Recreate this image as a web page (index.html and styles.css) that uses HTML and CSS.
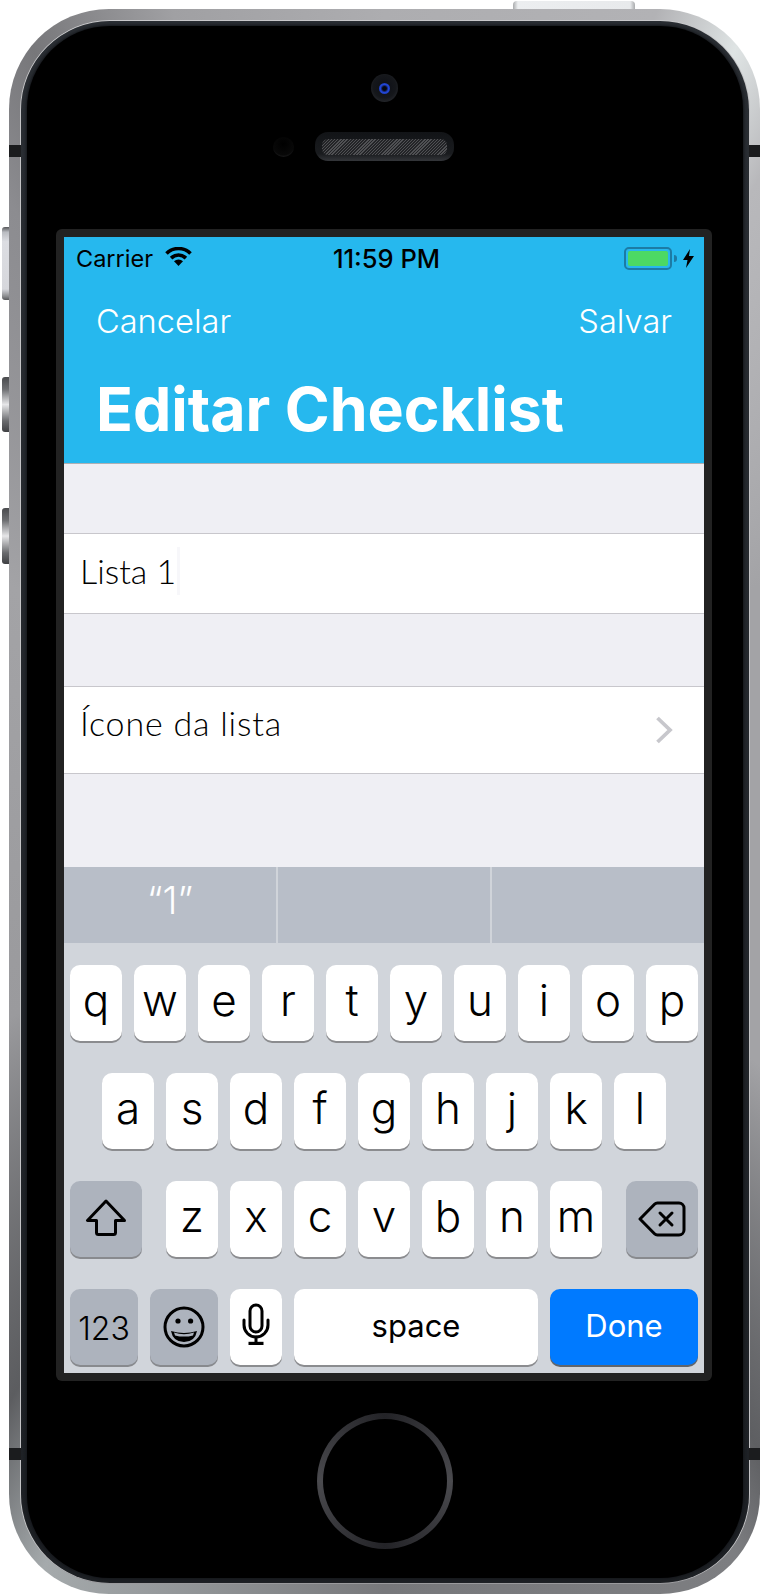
FILE: index.html
```html
<!DOCTYPE html>
<html lang="pt">
<head>
<meta charset="utf-8">
<title>Editar Checklist</title>
<link rel="stylesheet" href="styles.css">
</head>
<body>
<div class="device">
  <span class="btn-top"></span>
  <span class="btn-side btn-silent"></span>
  <span class="btn-side btn-vol btn-vol-up"></span>
  <span class="btn-side btn-vol btn-vol-down"></span>
  <div class="metal">
    <span class="band band-l band-upper"></span>
    <span class="band band-r band-upper"></span>
    <span class="band band-l band-lower"></span>
    <span class="band band-r band-lower"></span>
    <div class="rim">
      <div class="face">
        <div class="camera"><span class="lens"></span></div>
        <div class="earpiece">
          <span class="sensor"></span>
          <div class="speaker"><span class="grille"></span></div>
        </div>
        <div class="bezel">
          <div class="screen">
            <header class="nav">
              <div class="status">
                <div class="status-left">
                  <span>Carrier</span>
                  <svg class="wifi" width="27" height="19" viewBox="0 0 27 19"><path class="wifi-arc" d="M1.5 6.5A17 17 0 0 1 25.5 6.5"/><path class="wifi-arc" d="M6.1 11.1A10.5 10.5 0 0 1 20.9 11.1"/><path d="M13.5 19L9 14.2A6.5 6.5 0 0 1 18 14.2Z"/></svg>
                </div>
                <div class="status-time">11:59 PM</div>
                <div class="status-right">
                  <span class="battery"><span class="battery-fill"></span></span>
                  <span class="battery-nub"></span>
                  <svg class="bolt" width="11" height="19" viewBox="0 0 11 19"><path d="M7 0L0 11H4.5L3 19L11 7H6Z"/></svg>
                </div>
              </div>
              <div class="nav-actions">
                <span>Cancelar</span>
                <span>Salvar</span>
              </div>
              <h1 class="nav-title">Editar Checklist</h1>
            </header>
            <main class="content">
              <div class="cell cell-name">
                <span class="cell-text">Lista 1</span>
                <span class="caret"></span>
              </div>
              <div class="cell cell-icon">
                <span class="cell-text cell-text-wide">Ícone da lista</span>
                <svg class="chevron" width="18" height="28" viewBox="0 0 18 28"><path d="M2.5 2L15 14L2.5 26"/></svg>
              </div>
            </main>
            <section class="keyboard">
              <div class="suggestions">
                <div class="suggestion">“1”</div>
                <div class="suggestion"></div>
                <div class="suggestion"></div>
              </div>
              <div class="keys">
                <div class="row">
                  <span class="key">q</span><span class="key">w</span><span class="key">e</span><span class="key">r</span><span class="key">t</span><span class="key">y</span><span class="key">u</span><span class="key">i</span><span class="key">o</span><span class="key">p</span>
                </div>
                <div class="row row-home">
                  <span class="key">a</span><span class="key">s</span><span class="key">d</span><span class="key">f</span><span class="key">g</span><span class="key">h</span><span class="key">j</span><span class="key">k</span><span class="key">l</span>
                </div>
                <div class="row row-shift">
                  <span class="key key-dark key-wide">
                    <svg class="key-icon" width="44" height="40" viewBox="0 0 44 40"><path d="M22 2L3.5 21.5H12.5V33.5A2 2 0 0 0 14.5 35.5H29.5A2 2 0 0 0 31.5 33.5V21.5H40.5Z"/></svg>
                  </span>
                  <div class="row-letters">
                    <span class="key">z</span><span class="key">x</span><span class="key">c</span><span class="key">v</span><span class="key">b</span><span class="key">n</span><span class="key">m</span>
                  </div>
                  <span class="key key-dark key-wide">
                    <svg class="key-icon" width="48" height="36" viewBox="0 0 48 36"><path d="M2 18L16.5 3.2Q17.7 2 19.4 2H41A5 5 0 0 1 46 7V29A5 5 0 0 1 41 34H19.4Q17.7 34 16.5 32.8Z"/><path d="M22 12L34 24M34 12L22 24"/></svg>
                  </span>
                </div>
                <div class="row">
                  <span class="key key-dark key-mode key-label key-num">123</span>
                  <span class="key key-dark key-mode">
                    <svg class="key-icon" width="44" height="44" viewBox="0 0 44 44"><circle cx="22" cy="22" r="19"/><circle class="solid" cx="16" cy="16" r="2.6"/><circle class="solid" cx="28.6" cy="16" r="2.6"/><path class="solid" d="M9 26Q22 30 35 26Q33 37 22 37Q11 37 9 26Z"/><path class="teeth" d="M12 27.6Q22 30.8 32 27.6L31 30.4Q22 32.8 13 30.4Z"/></svg>
                  </span>
                  <span class="key">
                    <svg class="key-icon" width="28" height="42" viewBox="0 0 28 42"><rect x="8" y="2" width="12" height="27" rx="6"/><path d="M2 17V22A12 12 0 0 0 26 22V17"/><path d="M14 34V40"/><path class="base" d="M6.5 40.5H21.5"/></svg>
                  </span>
                  <span class="key key-space key-label">space</span>
                  <span class="key key-done key-label">Done</span>
                </div>
              </div>
            </section>
          </div>
        </div>
        <div class="home"><span class="home-inner"></span></div>
      </div>
    </div>
  </div>
</div>
</body>
</html>
```
FILE: styles.css
```css
* { box-sizing: border-box; }
html, body { margin: 0; padding: 0; background: #fff; }
body { width: 760px; height: 1594px; overflow: hidden; font-family: Inter, "Liberation Sans", sans-serif; }

.device { position: relative; width: 760px; height: 1594px; padding: 9px 0 0 9px; }

.btn-top {
  position: absolute; left: 513px; top: 1px; width: 122px; height: 9px;
  border-radius: 4px 4px 0 0;
  background: linear-gradient(90deg, #a9abad 0, #eceef0 4%, #e8eaec 96%, #a9abad 100%);
}
.btn-side { position: absolute; left: 2px; width: 7px; border-radius: 3px 0 0 3px; }
.btn-silent {
  top: 227px; height: 73px;
  background: linear-gradient(180deg, #56575a 0, #b9bbc0 7%, #dcdde2 20%, #d6d7dc 85%, #8a8b8e 95%, #57585a 100%);
}
.btn-vol { background: linear-gradient(180deg, #4a4b4e 0, #6d6e71 22%, #e6e6e8 50%, #6a6b6e 80%, #3f4043 100%); }
.btn-vol-up { top: 377px; height: 55px; }
.btn-vol-down { top: 508px; height: 56px; }

.metal {
  position: relative; width: 751px; height: 1585px; padding: 12px 11px 11px 12px;
  border-radius: 100px;
  background: conic-gradient(from 0deg at 50% 50%,
    #adadb0 0deg, #b2b2b5 19deg, #dfe4e4 25deg, #b8b8bb 31deg, #a3a3a6 60deg,
    #a3a3a6 125deg, #5e5f62 150deg, #7d7e81 155deg, #77787b 180deg, #a5aaac 204deg,
    #5c5d60 212deg, #9a9a9d 240deg, #a3a3a6 300deg, #8c8c90 328deg, #77777a 335deg, #a0a0a3 345deg, #adadb0 360deg);
}
.band { position: absolute; height: 12px; background: #1b1c1e; }
.band-l { left: 0; width: 12px; }
.band-r { right: 0; width: 11px; }
.band-upper { top: 136px; }
.band-lower { top: 1439px; }

.rim {
  height: 100%;
  padding: 5px 6px;
  border-radius: 89px;
  background: linear-gradient(180deg, #2a2e33 0, #1d2024 100%);
  box-shadow: 0 -1px 0 #c9c9cb, -1px 0 0 #c4c4c6, 1px 0 0 #c4c4c6, 0 1px 0 #9a9a9d;
}
.face {
  display: flex; flex-direction: column; align-items: center;
  height: 100%; padding: 48px 2px 0 0;
  border-radius: 83px;
  background: #000;
  box-shadow: 0 0 3px 1px #14161a;
}

.camera {
  display: flex; align-items: center; justify-content: center;
  width: 27px; height: 28px; border-radius: 50%;
  background: radial-gradient(circle at 50% 45%, #0d0f16 0, #15171b 55%, #33353a 100%);
}
.lens {
  width: 11px; height: 11px; border-radius: 50%;
  background: radial-gradient(circle at 50% 50%, #05070f 0, #05070f 24%, #2347d8 52%, #14308f 100%);
}

.earpiece {
  display: grid; grid-template-columns: 1fr 139px 1fr; align-items: center;
  width: 100%; margin-top: 30px;
}
.sensor {
  justify-self: end; width: 21px; height: 20px; margin-right: 21px; border-radius: 50%;
  background: radial-gradient(circle at 50% 35%, #000 0, #080808 65%, #3a3a3d 100%);
}
.speaker {
  display: flex; align-items: center; justify-content: center;
  grid-column: 2; height: 29px; border-radius: 13px;
  background: linear-gradient(180deg, #121417 0, #191b1e 75%, #34363a 100%);
}
.grille {
  width: 125px; height: 16px; border-radius: 6px;
  background: repeating-linear-gradient(135deg, #505154 0, #505154 1px, #232427 1px, #232427 2.2px);
}

.bezel {
  width: 656px; height: 1152px; margin-top: 68px; padding: 8px;
  border-radius: 6px;
  background: #222;
}
.screen {
  display: flex; flex-direction: column;
  width: 640px; height: 1136px;
  background: #efeff4;
}

.nav {
  height: 227px; border-bottom: 1px solid #aeb0b4;
  background: #26b8ee; color: #fff;
}
.status {
  display: grid; grid-template-columns: 1fr auto 1fr; align-items: center;
  height: 42px; padding: 0 10px 0 12px;
  color: #000; font-size: 23.5px;
}
.status-left { display: flex; align-items: center; gap: 12px; }
.wifi { display: block; margin-top: -3px; }
.wifi path { fill: #000; }
.wifi .wifi-arc { fill: none; stroke: #000; stroke-width: 3.6px; }
.status-time { margin-left: 3px; font-weight: 500; font-size: 25.5px; }
.status-right { display: flex; align-items: center; justify-content: flex-end; }
.battery {
  display: flex; width: 48px; height: 23px; padding: 2px;
  border: 2px solid #1c7ba5; border-radius: 5px;
}
.battery-fill { flex: 1; border-radius: 2px; background: #4cd964; }
.battery-nub { width: 3px; height: 7px; margin-left: 2px; border-radius: 0 3px 3px 0; background: #1c7ba5; }
.bolt { display: block; margin-left: 6px; }
.bolt path { fill: #000; }

.nav-actions {
  display: flex; align-items: center; justify-content: space-between;
  height: 84px; padding: 0 32px;
  font-size: 32.6px; font-weight: 300;
}
.nav-title {
  margin: -2px 0 0; padding: 0 32px;
  font-size: 60.8px; line-height: 96px; font-weight: 700;
}

.content { flex: 1; padding-top: 69px; }
.cell {
  display: flex; align-items: center;
  border-top: 1px solid #c8c7cc; border-bottom: 1px solid #c8c7cc;
  background: #fff; color: #000;
  padding-left: 16px;
}
.cell-name { height: 81px; padding-bottom: 6px; }
.cell-icon { height: 88px; margin-top: 72px; padding-bottom: 16px; }
.cell-text { font-family: Lato, "Liberation Sans", sans-serif; font-weight: 300; font-size: 34px; }
.cell-text-wide { letter-spacing: 0.8px; }
.caret { width: 3px; height: 48px; margin-left: 1px; background: #f7f7fa; }
.chevron { margin-left: auto; margin-right: 31px; margin-bottom: -16px; }
.chevron path { fill: none; stroke: #c7c7cc; stroke-width: 3.8px; }

.keyboard { display: flex; flex-direction: column; height: 506px; background: #d1d5db; }
.suggestions { display: flex; height: 76px; background: #b8bec8; }
.suggestion {
  flex: 1; display: flex; align-items: center; justify-content: center;
  padding-bottom: 10px;
  color: #fff; font-size: 38px; font-weight: 300;
}
.suggestion + .suggestion { border-left: 2px solid #d0d4da; }

.keys { display: flex; flex-direction: column; gap: 32px; padding: 22px 6px 0; }
.row { display: flex; gap: 12px; }
.row-home { padding: 0 32px; }
.row-shift { justify-content: space-between; }
.row-letters { display: flex; gap: 12px; }

.key {
  display: flex; align-items: center; justify-content: center;
  width: 52px; height: 76px; padding-bottom: 6px;
  border-radius: 10px;
  background: #fff; color: #000;
  box-shadow: 0 2px 0 #8b8c8f;
  font-size: 44px; font-weight: 300;
}
.key-dark { background: #adb3bd; box-shadow: 0 2px 0 #888a8e; }
.key-wide { width: 72px; padding-bottom: 0; }
.key-mode { width: 68px; padding-bottom: 0; }
.key-label { font-size: 31px; font-weight: 400; padding-bottom: 3px; }
.key-num { font-size: 32px; font-weight: 300; padding-bottom: 0; padding-top: 2px; }
.key-space { width: 244px; }
.key-done { width: 148px; background: #007aff; color: #fff; box-shadow: 0 2px 0 #60656c; }

.key-icon { display: block; }
.key-icon * { fill: none; stroke: #000; stroke-width: 3px; stroke-linejoin: round; stroke-linecap: round; }
.key-icon .solid { fill: #000; stroke: none; }
.key-icon .teeth { fill: #adb3bd; stroke: none; }
.key-icon .base { stroke-width: 3.4px; stroke-linecap: butt; }

.home {
  width: 136px; height: 136px; margin: 32px 0 0 2px; padding: 6px;
  border-radius: 50%;
  background: conic-gradient(#232327 0deg, #4a4a4e 90deg, #232327 180deg, #4a4a4e 270deg, #232327 360deg);
}
.home-inner { display: block; width: 100%; height: 100%; border-radius: 50%; background: #000; }
```
